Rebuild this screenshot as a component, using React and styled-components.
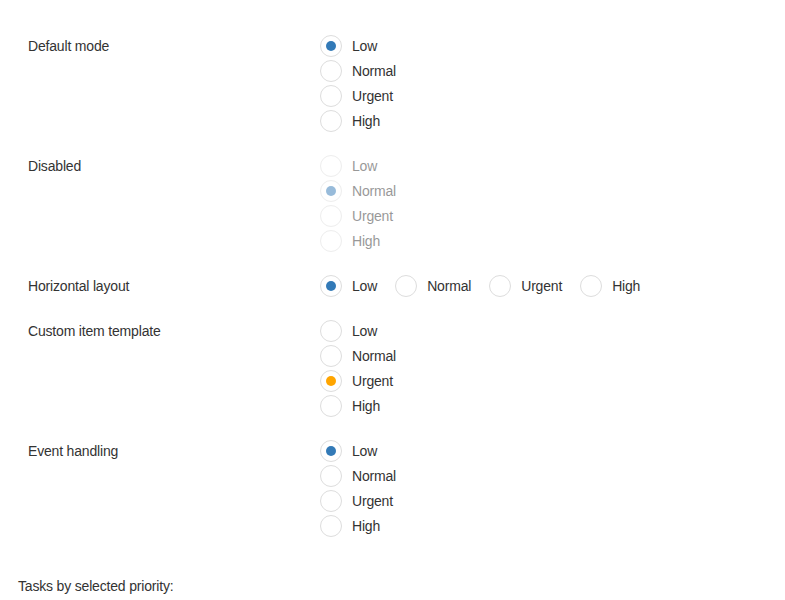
import React, { useState } from 'react';
import styled, { createGlobalStyle } from 'styled-components';

const GlobalStyle = createGlobalStyle`
  body {
    margin: 0;
    background: #fff;
    font-family: "Liberation Sans", Arial, sans-serif;
    font-size: 14px;
    letter-spacing: -0.18px;
    color: #333;
  }
`;

const priorities = ['Low', 'Normal', 'Urgent', 'High'];

const Page = styled.div`
  padding: 35px 0 0 0;
`;

const Fieldset = styled.div`
  padding: 0 20px 0 28px;
`;

const Field = styled.div`
  display: flex;
  align-items: flex-start;
  margin-bottom: 20px;
`;

const Label = styled.div`
  width: 292px;
  flex-shrink: 0;
  line-height: 22px;
`;

const Group = styled.div`
  display: flex;
  flex-direction: ${(p) => (p.$horizontal ? 'row' : 'column')};
  opacity: ${(p) => (p.$disabled ? 0.5 : 1)};
`;

const Item = styled.div`
  display: flex;
  align-items: center;
  height: 22px;
  margin-bottom: 3px;
  margin-right: ${(p) => (p.$horizontal ? '18px' : '0')};
  cursor: ${(p) => (p.$disabled ? 'default' : 'pointer')};
`;

const Circle = styled.span`
  width: 20px;
  height: 20px;
  border: 1px solid #ddd;
  border-radius: 50%;
  display: flex;
  align-items: center;
  justify-content: center;
  background: #fff;
  flex-shrink: 0;
`;

const Dot = styled.span`
  width: 10px;
  height: 10px;
  border-radius: 50%;
  background: ${(p) => p.$color};
`;

const ItemText = styled.span`
  padding-left: 10px;
  line-height: 22px;
`;

const Tasks = styled.div`
  padding: 16px 0 0 18px;
  line-height: 20px;
`;

function RadioGroup({ value, onChange, horizontal, disabled, colorFor }) {
  return (
    <Group $horizontal={horizontal} $disabled={disabled}>
      {priorities.map((p) => (
        <Item
          key={p}
          $horizontal={horizontal}
          $disabled={disabled}
          onClick={() => !disabled && onChange && onChange(p)}
        >
          <Circle>
            {value === p && <Dot $color={colorFor ? colorFor(p) : '#337ab7'} />}
          </Circle>
          <ItemText>{p}</ItemText>
        </Item>
      ))}
    </Group>
  );
}

const customColor = (p) =>
  ({ Low: '#337ab7', Normal: '#337ab7', Urgent: '#ffa500', High: '#d9534f' }[p]);

export default function App() {
  const [def, setDef] = useState('Low');
  const [hor, setHor] = useState('Low');
  const [custom, setCustom] = useState('Urgent');
  const [evt, setEvt] = useState('Low');

  return (
    <Page>
      <GlobalStyle />
      <Fieldset>
        <Field>
          <Label>Default mode</Label>
          <RadioGroup value={def} onChange={setDef} />
        </Field>
        <Field>
          <Label>Disabled</Label>
          <RadioGroup value="Normal" disabled />
        </Field>
        <Field>
          <Label>Horizontal layout</Label>
          <RadioGroup value={hor} onChange={setHor} horizontal />
        </Field>
        <Field>
          <Label>Custom item template</Label>
          <RadioGroup value={custom} onChange={setCustom} colorFor={customColor} />
        </Field>
        <Field>
          <Label>Event handling</Label>
          <RadioGroup value={evt} onChange={setEvt} />
        </Field>
      </Fieldset>
      <Tasks>Tasks by selected priority:</Tasks>
    </Page>
  );
}
